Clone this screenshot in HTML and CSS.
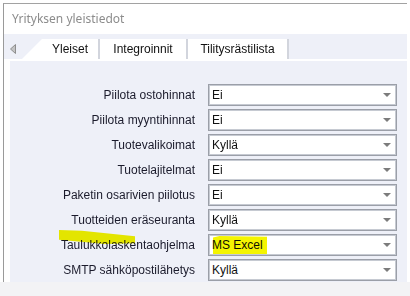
FILE: index.html
```html
<!DOCTYPE html>
<html lang="fi">
<head>
    <meta charset="UTF-8">
    <meta name="viewport" content="width=device-width, initial-scale=1.0">
    <title>Yrityksen yleistiedot</title>
    <link rel="stylesheet" href="styles.css">
</head>
<body>
    <div class="window">
        <div class="header">Yrityksen yleistiedot</div>
        <div class="tabs">
            <div class="tab-scroll">
                <svg width="6" height="10" viewBox="0 0 6 10"><polygon points="0.5,5 5.5,0.5 5.5,9.5" fill="#c4c4c4" stroke="#8e8e8e" stroke-width="1"/></svg>
            </div>
            <div class="tab active">Yleiset</div>
            <div class="tab tab-integ">Integroinnit</div>
            <div class="tab tab-tilitys">Tilitysrästilista</div>
        </div>
        <div class="panel">
            <div class="form">
                <div class="label">Piilota ostohinnat</div>
                <div class="select"><span>Ei</span><svg class="caret" width="8" height="4" viewBox="0 0 8 4"><polygon points="0,0 8,0 4,4" fill="#7c7c7c"/></svg></div>

                <div class="label">Piilota myyntihinnat</div>
                <div class="select"><span>Ei</span><svg class="caret" width="8" height="4" viewBox="0 0 8 4"><polygon points="0,0 8,0 4,4" fill="#7c7c7c"/></svg></div>

                <div class="label">Tuotevalikoimat</div>
                <div class="select"><span>Kyllä</span><svg class="caret" width="8" height="4" viewBox="0 0 8 4"><polygon points="0,0 8,0 4,4" fill="#7c7c7c"/></svg></div>

                <div class="label">Tuotelajitelmat</div>
                <div class="select"><span>Ei</span><svg class="caret" width="8" height="4" viewBox="0 0 8 4"><polygon points="0,0 8,0 4,4" fill="#7c7c7c"/></svg></div>

                <div class="label">Paketin osarivien piilotus</div>
                <div class="select"><span>Ei</span><svg class="caret" width="8" height="4" viewBox="0 0 8 4"><polygon points="0,0 8,0 4,4" fill="#7c7c7c"/></svg></div>

                <div class="label">Tuotteiden eräseuranta</div>
                <div class="select"><span>Kyllä</span><svg class="caret" width="8" height="4" viewBox="0 0 8 4"><polygon points="0,0 8,0 4,4" fill="#7c7c7c"/></svg></div>

                <div class="label marked">Taulukkolaskentaohjelma</div>
                <div class="select marked"><span>MS Excel</span><svg class="caret" width="8" height="4" viewBox="0 0 8 4"><polygon points="0,0 8,0 4,4" fill="#7c7c7c"/></svg></div>

                <div class="label">SMTP sähköpostilähetys</div>
                <div class="select"><span>Kyllä</span><svg class="caret" width="8" height="4" viewBox="0 0 8 4"><polygon points="0,0 8,0 4,4" fill="#7c7c7c"/></svg></div>
            </div>
        </div>
    </div>
    <div class="footer"></div>
</body>
</html>
```

FILE: styles.css
```css
:root {
    --panel-bg: #eef0f8;
    --text-color: #1b1b2c;
    --tab-border: #d2d5dd;
    --marker: #f4f400;
}
body, html { margin: 0; padding: 0; background: #fff; font-family: "Liberation Sans", Arial, sans-serif; font-size: 12px; color: var(--text-color); }
.window { margin: 3px 3px 0 3px; border-top: 1px solid #a2a2a2; border-left: 1px solid #9a9a9a; }
.header { height: 30px; line-height: 29px; padding-left: 8px; font-family: "Noto Sans", "Open Sans", sans-serif; font-size: 12px; color: #8c8c8c; }
.tabs { display: flex; align-items: flex-end; height: 25px; background: var(--panel-bg); border-bottom: 2px solid #fff; }
.tab-scroll { width: 18px; align-self: center; padding-left: 6px; box-sizing: border-box; display: flex; padding-top: 5px; }
.tab { height: 20px; line-height: 20px; background: #fff; text-align: center; border-right: 2px solid var(--tab-border); font-size: 12px; color: #111; }
.tab.active { width: 78px; padding-left: 20px; box-sizing: border-box; clip-path: polygon(0 100%, 20px 0, 100% 0, 100% 100%); }
.tab-integ { width: 86px; }
.tab-tilitys { width: 99px; }
.panel { margin-left: 6px; background: var(--panel-bg); padding: 23px 0 1px 0; }
.form { display: grid; grid-template-columns: 185px 189px; column-gap: 13px; row-gap: 3px; }
.label { height: 22px; line-height: 22px; text-align: right; white-space: nowrap; position: relative; }
.select { height: 22px; box-sizing: border-box; background: #fff; border: 1px solid #9b9fa8; box-shadow: inset 0 0 0 1px #c6cad2; display: flex; align-items: center; justify-content: space-between; padding: 0 5px 0 3px; position: relative; color: #111; }
.caret { display: block; }
.label.marked::after { content: ""; position: absolute; right: 60px; top: -4px; width: 76px; height: 14px; background: var(--marker); mix-blend-mode: multiply; clip-path: polygon(0 0, 30% 5%, 100% 45%, 100% 95%, 60% 100%, 0 70%); }
.select.marked::after { content: ""; position: absolute; left: 4px; top: 1px; width: 54px; height: 18px; background: var(--marker); mix-blend-mode: multiply; clip-path: polygon(0 8%, 12% 0, 100% 4%, 100% 100%, 0 100%); }
.footer { height: 14px; background: #f3f3f5; }
```
